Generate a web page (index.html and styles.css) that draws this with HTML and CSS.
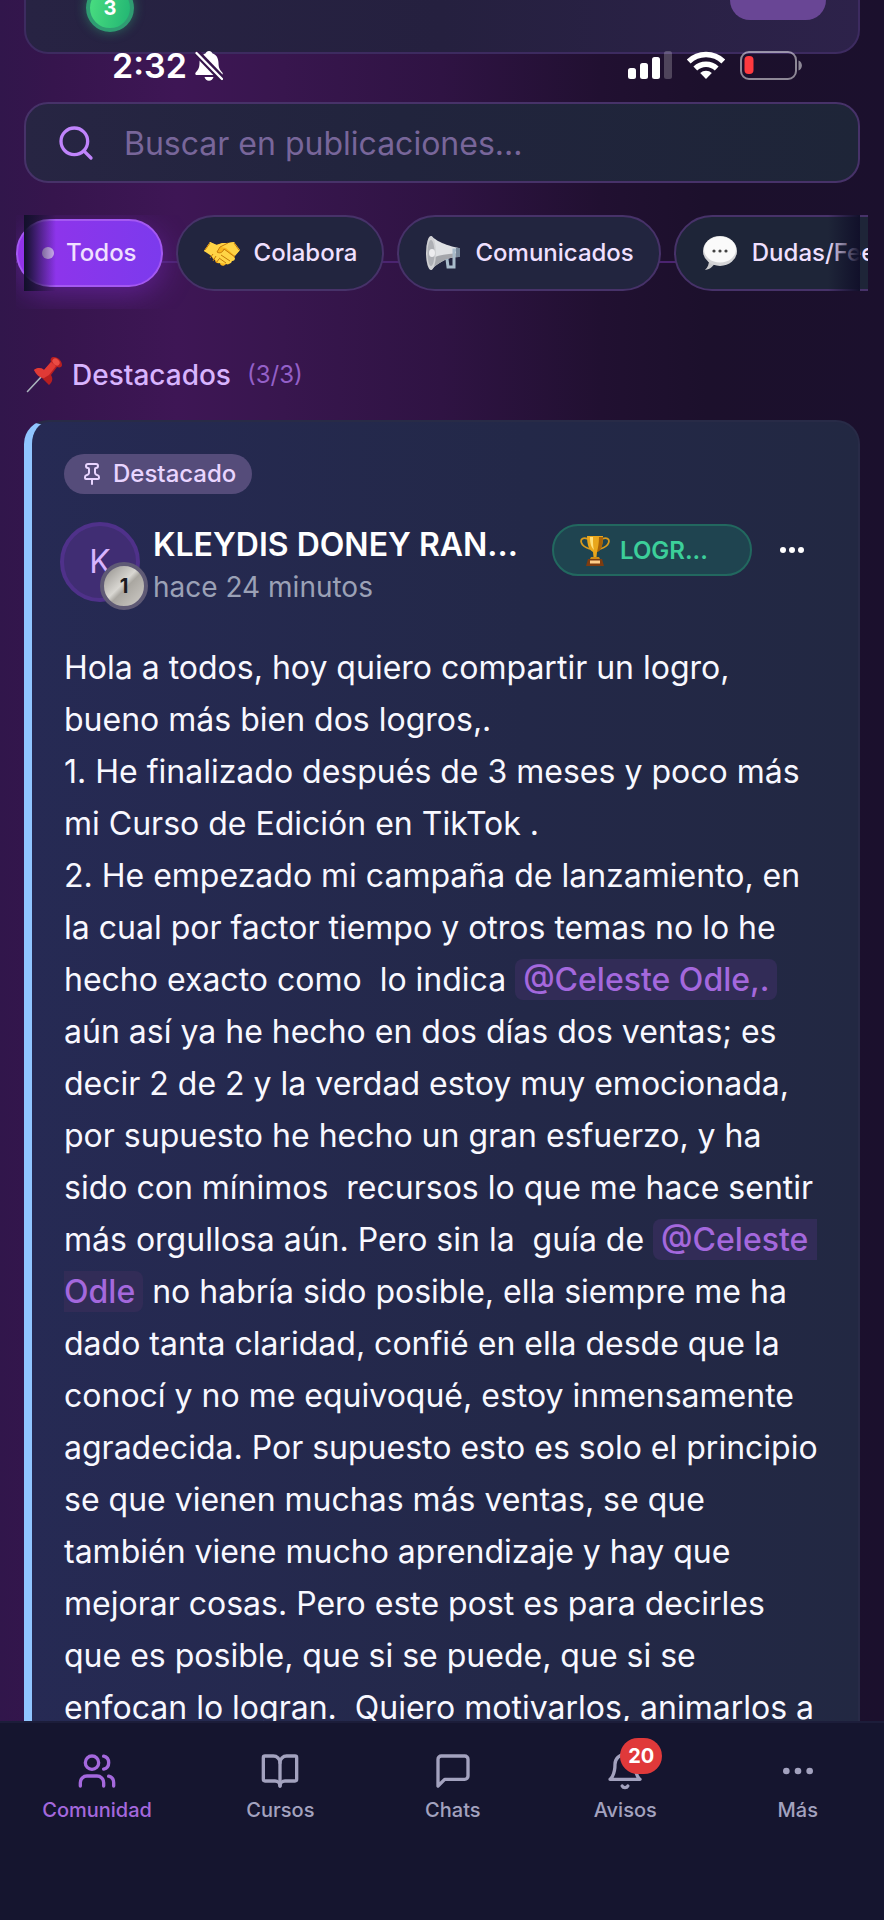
FILE: index.html
```html
<!DOCTYPE html>
<html lang="es">
<head>
<meta charset="utf-8">
<meta name="viewport" content="width=device-width, initial-scale=1">
<title>Comunidad</title>
<link rel="stylesheet" href="styles.css">
</head>
<body>
<div class="app">
  <div class="status">
    <div class="status-group">
      <span class="clock">2:32</span>
      <svg class="status-bell" viewBox="0 0 28 30" aria-hidden="true">
        <path fill="#fff" d="M14 0c-1.800 0-3 1-3.300 2.300C6.500 3.700 4.600 7.300 4.500 12c-.1 4.500-1 6.500-3.600 9.300C-.3 22.800.3 24 2 24h24c1.700 0 2.300-1.200 1.100-2.700-2.600-2.800-3.500-4.800-3.600-9.300-.1-4.700-2-8.300-6.200-9.700C17 1 15.800 0 14 0zM9.500 26h9c-.6 2.400-2.300 3.800-4.500 3.800S10.100 28.400 9.500 26z"/>
        <path stroke="#36154c" stroke-width="7" d="M0 0l29 30"/>
        <path stroke="#fff" stroke-width="2.400" stroke-linecap="round" d="M1.500 2l25.500 26"/>
      </svg>
    </div>
    <div class="status-group status-right">
      <svg class="signal" viewBox="0 0 44 28" fill="#fff" aria-hidden="true">
        <rect x="0" y="17" width="8" height="11" rx="2.500"/><rect x="12" y="12" width="8" height="16" rx="2.500"/><rect x="24" y="6" width="8" height="22" rx="2.500"/><rect x="36" y="0" width="8" height="28" rx="2.500" opacity=".22"/>
      </svg>
      <svg class="wifi" viewBox="0 0 40 28" fill="none" stroke="#fff" aria-hidden="true">
        <path stroke-width="5.500" d="M2.700 10.500a25 25 0 0 1 34.600 0"/><path stroke-width="5.500" d="M9.300 17.500a15.500 15.500 0 0 1 21.400 0"/><path fill="#fff" stroke="none" d="M20 28l-5.800-5.900a8.400 8.400 0 0 1 11.600 0z"/>
      </svg>
      <svg class="battery" viewBox="0 0 62 29" fill="none" aria-hidden="true">
        <rect x="1" y="1" width="55" height="27" rx="8" stroke="#fff" stroke-opacity=".5" stroke-width="2"/>
        <rect x="4.500" y="5" width="9" height="18" rx="4" fill="#ff3a3f"/><path fill="#fff" fill-opacity=".5" d="M58.500 9.500c4.500 1.500 4.500 8.500 0 10z"/>
      </svg>
    </div>
  </div>

  <main class="feed">
    <section class="hero">
      <span class="level">3</span>
      <span class="hero-action"></span>
    </section>

    <label class="search">
      <svg class="icon" viewBox="0 0 24 24" aria-hidden="true"><circle cx="11" cy="11" r="8"/><path d="m21 21-4.300-4.300"/></svg>
      <input type="search" placeholder="Buscar en publicaciones..." aria-label="Buscar en publicaciones">
    </label>

    <div class="filters">
      <div class="chips">
        <button class="chip chip-active" type="button"><span class="dot"></span>Todos</button>
        <button class="chip" type="button">
          <svg class="emoji" viewBox="0 0 36 36" aria-hidden="true">
            <path fill="#f9b51d" d="M6 7l6 3 6-2 6 0 6-1 5 9-5 5c1 3-1 5-3 5-1 3-3 4-5 3-2 3-6 2-6-1-3 1-5-1-5-3-3-1-4-4-2-6L0 16z"/>
            <path fill="#ffd445" d="M6 7l7 3 6-2 5 0-8 4-3 5c3 2 6 0 7-3l11 9c0 2-1 3-3 3l-1 2-3 1-9-1-9-8L0 16z"/>
            <path fill="#ffd445" d="M30 7l6 8-5 6-9-8-5-1 7-4z"/>
            <g fill="none" stroke="#c57a0a" stroke-width="1"><path d="M24 8l-8 4-3 5c3 2 6 0 7-3l11 8M17 20l9 6M15 23l7 5M9 19l-3 4M12 21l-3 5M15 24l-3 4M6 8L1 15M30 8l5 7"/></g>
          </svg>Colabora</button>
        <button class="chip" type="button">
          <svg class="emoji" viewBox="0 0 36 36" aria-hidden="true">
            <path fill="#dfe1e4" d="M6 1c3 2 8 8 28 12v9C20 22 11 30 6 35z"/><path fill="#a4a6ab" d="M10 22c8-3 17-3 24-4v4C20 22 11 30 6 35z"/>
            <ellipse cx="6" cy="18" rx="5" ry="17" fill="#d0d1d4"/><ellipse cx="6" cy="18" rx="3.500" ry="13" fill="#aeb0b5"/><ellipse cx="7" cy="18" rx="3" ry="4" fill="#ececef"/>
            <path fill="none" stroke="#a9bccb" stroke-width="3" d="M22 24l1 8h6V15h5"/><path fill="#77879a" d="M31 13h4v9h-4z"/>
          </svg>Comunicados</button>
        <button class="chip" type="button">
          <svg class="emoji" viewBox="0 0 36 36" aria-hidden="true">
            <path fill="#c9c9cb" d="M7 25c0 4-1 7-4 10 6-1 8-4 10-7z"/><ellipse cx="18" cy="16" rx="17" ry="15" fill="#d5d5d7"/><ellipse cx="18" cy="14.500" rx="16" ry="13" fill="#fafafa"/>
            <g fill="#444"><circle cx="12" cy="16" r="1.600"/><circle cx="18" cy="16" r="1.600"/><circle cx="24" cy="16" r="1.600"/></g>
          </svg>Dudas/Feedback</button>
      </div>
    </div>

    <h2 class="section-title">
      <svg class="emoji" viewBox="0 0 36 36" aria-hidden="true">
        <path stroke="#aab4bd" stroke-width="1.600" stroke-linecap="round" d="M1.500 34.500L16 19"/>
        <path fill="#b81f20" d="M8 13c4-3 8-2 10 0l7-8c-1-3 0-5 3-5 4 0 8 4 8 8 0 2-2 3-5 2l-6 8c2 3 2 7-2 10z"/>
        <path fill="#e03a36" d="M8 13c4-3 8-2 10 0l7-8 5 4-7 9-5 3c-5 0-8-4-10-8z"/><ellipse cx="30" cy="5" rx="4" ry="3" transform="rotate(42 30 5)" fill="#ea4b44"/>
      </svg>Destacados <span class="count">(3/3)</span>
    </h2>

    <article class="post">
      <span class="pinned">
        <svg class="icon" viewBox="0 0 24 24" aria-hidden="true"><path d="M12 17v5"/><path d="M9 10.760a2 2 0 0 1-1.110 1.790l-1.780.9A2 2 0 0 0 5 15.240V16a1 1 0 0 0 1 1h12a1 1 0 0 0 1-1v-.760a2 2 0 0 0-1.110-1.790l-1.780-.9A2 2 0 0 1 15 10.760V7a1 1 0 0 1 1-1 2 2 0 0 0 0-4H8a2 2 0 0 0 0 4 1 1 0 0 1 1 1z"/></svg>Destacado</span>
      <header class="post-head">
        <div class="avatar">K<span class="rank">1</span></div>
        <div class="author">
          <h3 class="name">KLEYDIS DONEY RAN...</h3>
          <time class="time">hace 24 minutos</time>
        </div>
        <span class="category">
          <svg class="trophy" viewBox="0 0 30 31" aria-hidden="true">
            <path fill="none" stroke="#d99a1c" stroke-width="1.800" d="M8 4C3 2 0 4 1.500 8S7 13 10 14M22 4c5-2 8 0 6.500 4S23 13 20 14"/>
            <path fill="#e9a61c" d="M7 1h16c0 9-2 14-6 16l-.5 5h-3L13 17C9 15 7 10 7 1z"/><path fill="#ffe07a" d="M10 2h3c0 6 0 9 1 13-3-3-4-7-4-13z"/><path fill="#a96208" d="M19 2h4c0 9-2 14-6 15 1-4 2-9 2-15z"/>
            <path fill="#d08a14" d="M11 22h8l1 2H10z"/><path fill="#7d3c10" d="M8 24h14l2 7H6z"/><path fill="#ffcf8a" d="M10 25.500h10v3H10z"/>
          </svg>LOGR...</span>
        <button class="more" type="button" aria-label="Más opciones"><svg viewBox="0 0 24 6" fill="currentColor" aria-hidden="true"><circle cx="3" cy="3" r="3"/><circle cx="12" cy="3" r="3"/><circle cx="21" cy="3" r="3"/></svg></button>
      </header>
      <p class="body">Hola a todos, hoy quiero compartir un logro, bueno más bien dos logros,.
1. He finalizado después de 3 meses y poco más mi Curso de Edición en TikTok .
2. He empezado mi campaña de lanzamiento, en la cual por factor tiempo y otros temas no lo he hecho exacto como  lo indica <a class="mention" href="#">@Celeste Odle,.</a> aún así ya he hecho en dos días dos ventas; es decir 2 de 2 y la verdad estoy muy emocionada, por supuesto he hecho un gran esfuerzo, y ha sido con mínimos  recursos lo que me hace sentir más orgullosa aún. Pero sin la  guía de <a class="mention" href="#">@Celeste Odle</a> no habría sido posible, ella siempre me ha dado tanta claridad, confié en ella desde que la conocí y no me equivoqué, estoy inmensamente agradecida. Por supuesto esto es solo el principio se que vienen muchas más ventas, se que también viene mucho aprendizaje y hay que mejorar cosas. Pero este post es para decirles que es posible, que si se puede, que si se enfocan lo logran.  Quiero motivarlos, animarlos a</p>
    </article>
  </main>

  <nav class="tabs">
    <a class="tab tab-active" href="#"><svg class="icon" viewBox="0 0 24 24" aria-hidden="true"><path d="M16 21v-2a4 4 0 0 0-4-4H6a4 4 0 0 0-4 4v2"/><circle cx="9" cy="7" r="4"/><path d="M22 21v-2a4 4 0 0 0-3-3.870M16 3.130a4 4 0 0 1 0 7.750"/></svg>Comunidad</a>
    <a class="tab" href="#"><svg class="icon" viewBox="0 0 24 24" aria-hidden="true"><path d="M12 7v14"/><path d="M3 18a1 1 0 0 1-1-1V4a1 1 0 0 1 1-1h5a4 4 0 0 1 4 4 4 4 0 0 1 4-4h5a1 1 0 0 1 1 1v13a1 1 0 0 1-1 1h-6a3 3 0 0 0-3 3 3 3 0 0 0-3-3z"/></svg>Cursos</a>
    <a class="tab" href="#"><svg class="icon" viewBox="0 0 24 24" aria-hidden="true"><path d="M21 15a2 2 0 0 1-2 2H7l-4 4V5a2 2 0 0 1 2-2h14a2 2 0 0 1 2 2z"/></svg>Chats</a>
    <a class="tab" href="#"><span class="tab-icon"><svg class="icon" viewBox="0 0 24 24" aria-hidden="true"><path d="M6 8a6 6 0 0 1 12 0c0 7 3 9 3 9H3s3-2 3-9"/><path d="M10.300 21a1.940 1.940 0 0 0 3.400 0"/></svg><span class="badge">20</span></span>Avisos</a>
    <a class="tab" href="#"><svg class="icon" viewBox="0 0 24 24" aria-hidden="true"><circle cx="12" cy="12" r="1"/><circle cx="19" cy="12" r="1"/><circle cx="5" cy="12" r="1"/></svg>Más</a>
  </nav>
</div>
</body>
</html>
```
FILE: styles.css
```css
* { box-sizing: border-box; }

body {
  margin: 0;
  font-family: Inter, "Noto Sans", sans-serif;
  color: #f5f3ff;
  background: #1b102c;
}

button, input { font: inherit; }
a { color: inherit; text-decoration: none; }

.app {
  position: relative;
  display: flex;
  flex-direction: column;
  height: 100vh;
  overflow: hidden;
  background: linear-gradient(90deg, #31164b 0, #36154d 6%, #3e1655 20%, #38164e 32%, #2f1343 50%, #211031 68%, #1c102c 80%, #1b102d 100%);
}

.icon {
  flex: none;
  width: 40px;
  height: 40px;
  fill: none;
  stroke: currentColor;
  stroke-width: 2;
  stroke-linecap: round;
  stroke-linejoin: round;
}

/* Status bar */
.status {
  position: absolute;
  inset: 0 0 auto 0;
  z-index: 2;
  display: flex;
  justify-content: space-between;
  padding: 44px 82px 0 112px;
}
.status-group { display: flex; align-items: center; gap: 8px; height: 44px; }
.status-right { gap: 14px; height: 42px; }
.clock { font-size: 34px; font-weight: 600; line-height: 44px; color: #fff; }
.status-bell { width: 28px; height: 30px; }
.signal { width: 44px; height: 28px; }
.wifi { width: 40px; height: 28px; }
.battery { width: 62px; height: 29px; }

/* Feed */
.feed { flex: 1; min-height: 0; overflow: hidden; padding: 0 24px; }

.hero {
  display: flex;
  align-items: flex-end;
  justify-content: space-between;
  height: 134px;
  margin-top: -80px;
  padding: 0 32px 32px 60px;
  border: 2px solid #3d2b60;
  border-radius: 24px;
  background: linear-gradient(90deg, #272343, #25203f 50%, #2d224a);
}
.level {
  width: 48px;
  height: 48px;
  margin-bottom: -12px;
  border: 4px solid #2f9c72;
  border-radius: 50%;
  background: linear-gradient(100deg, #4ade80, #22b573);
  box-shadow: 0 0 12px rgba(52, 211, 130, .4);
  color: #fff;
  font-size: 20px;
  font-weight: 700;
  line-height: 40px;
  text-align: center;
}
.hero-action { width: 96px; height: 80px; border-radius: 20px; background: #694695; }

.search {
  display: flex;
  align-items: center;
  gap: 28px;
  height: 81px;
  margin-top: 48px;
  padding: 0 30px;
  border: 2px solid #473269;
  border-radius: 24px;
  background: linear-gradient(90deg, #272543, #21243d 45%, #1e2538);
  color: #c084fc;
}
.search input {
  flex: 1;
  min-width: 0;
  padding: 2px 0 0;
  border: 0;
  outline: 0;
  background: none;
  color: #f5f3ff;
  font-size: 32px;
  line-height: 44px;
}
.search input::placeholder { color: #78669a; opacity: 1; }

.filters { position: relative; margin: 0 -8px; padding-top: 32px; }
.filters::before,
.filters::after {
  content: "";
  position: absolute;
  z-index: 1;
  top: 32px;
  height: 76px;
  width: 32px;
}
.filters::before { left: 8px; background: linear-gradient(90deg, #11102a, transparent); }
.filters::after { right: 8px; background: linear-gradient(270deg, #11102a, transparent); }
.chips {
  display: flex;
  gap: 13px;
  height: 94px;
  overflow: hidden;
  background: linear-gradient(#4b2470, #4b2470) 0 46px / 100% 2px no-repeat;
}
.chip {
  display: flex;
  flex: none;
  align-items: center;
  gap: 14px;
  height: 76px;
  padding: 0 25px 0 26px;
  border: 2px solid #473269;
  border-radius: 38px;
  background: #22253f;
  color: #f0e0ff;
  font-size: 24px;
  font-weight: 500;
  line-height: 32px;
}
.chip:last-child { background: #1e2538; }
.chip-active {
  gap: 12px;
  height: 68px;
  margin-top: 4px;
  padding: 0 24px;
  border-color: #a458f2;
  background: linear-gradient(90deg, #9333ea, #7c3aed);
  box-shadow: 0 8px 30px rgba(147, 51, 234, .4);
}
.dot { width: 12px; height: 12px; border-radius: 50%; background: #d2b0f6; }
.emoji { flex: none; width: 36px; height: 36px; }

.section-title {
  display: flex;
  align-items: center;
  margin: 28px 0 0;
  padding-left: 2px;
  height: 75px;
  color: #d8b4fe;
  font-size: 28px;
  font-weight: 500;
  line-height: 40px;
}
.section-title .emoji { margin-right: 10px; }
.count { margin-left: 16px; color: #9460c8; font-size: 24px; font-weight: 400; }

/* Post */
.post {
  min-height: 1400px;
  margin-top: 8px;
  padding: 32px 38px 32px 32px;
  border: 2px solid #282b47;
  border-left: 8px solid #90c5ff;
  border-radius: 24px;
  background: linear-gradient(90deg, #262a54, #232848 60%, #222842) border-box;
}
.pinned {
  display: inline-flex;
  align-items: center;
  gap: 9px;
  height: 40px;
  padding: 0 16px;
  border-radius: 20px;
  background: #554c7a;
  color: #e9d5ff;
  font-size: 24px;
  font-weight: 500;
  line-height: 32px;
}
.pinned .icon { width: 24px; height: 24px; }
.post-head { display: flex; align-items: flex-start; margin: 28px -12px 0 0; height: 80px; }
.avatar {
  position: relative;
  flex: none;
  width: 80px;
  height: 80px;
  margin-left: -4px;
  border: 4px solid #4f318a;
  border-radius: 50%;
  background: #402d73;
  color: #d8b4fe;
  font-size: 32px;
  line-height: 72px;
  text-align: center;
}
.rank {
  position: absolute;
  right: -12px;
  bottom: -12px;
  width: 48px;
  height: 48px;
  border: 4px solid #5f5a75;
  border-radius: 50%;
  background: linear-gradient(135deg, #8f8c88, #d9d7d2 45%, #aaa7a1 55%, #d0cdc8);
  color: #1b1b1f;
  font-size: 20px;
  font-weight: 700;
  line-height: 40px;
}
.author { flex: 1; min-width: 0; margin-left: 13px; }
.name { margin: 0; overflow: hidden; color: #fff; font-size: 32px; font-weight: 600; line-height: 45px; white-space: nowrap; }
.time { display: block; color: #9ba1b6; font-size: 28px; line-height: 41px; }
.category {
  display: flex;
  flex: none;
  align-items: center;
  gap: 10px;
  width: 200px;
  height: 52px;
  margin-top: 2px;
  padding: 0 26px;
  border: 2px solid #22685f;
  border-radius: 26px;
  background: #1f4450;
  color: #3ccf9a;
  font-size: 24px;
  font-weight: 600;
}
.trophy { width: 30px; height: 31px; }
.more { width: 80px; height: 56px; padding: 0; border: 0; background: none; color: #fff; }
.more svg { display: block; width: 24px; height: 6px; margin: 0 auto; }
.body { margin: 40px 0 0; color: #f8f8ff; font-size: 32px; line-height: 52px; white-space: pre-wrap; }
.mention { padding: 1px 8px; border-radius: 8px; background: #322c57; color: #a468dd; font-weight: 500; }

/* Bottom tabs */
.tabs {
  display: flex;
  flex: none;
  justify-content: space-around;
  height: 199px;
  padding-top: 28px;
  border-top: 2px solid #1c1d3a;
  background: #15152f;
  color: #a3a2bf;
  font-size: 20px;
  font-weight: 500;
  line-height: 28px;
}
.tab { display: flex; flex-direction: column; align-items: center; gap: 5px; min-width: 128px; padding: 0 20px; }
.tab-active { color: #a468dd; }
.tab-icon { position: relative; height: 40px; }
.badge {
  position: absolute;
  top: -13px;
  right: -17px;
  min-width: 42px;
  height: 36px;
  padding: 0 8px;
  border-radius: 18px;
  background: #e0393a;
  color: #fff;
  font-weight: 700;
  line-height: 36px;
  text-align: center;
}
```
